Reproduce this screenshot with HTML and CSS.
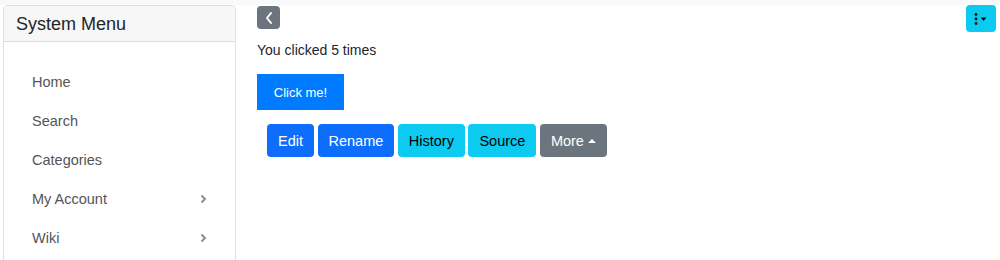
FILE: index.html
```html
<!DOCTYPE html>
<html>
<head>
<meta charset="utf-8">
<link rel="stylesheet" href="styles.css">
</head>
<body>
<div class="topbar"></div>
<div class="layout">
  <aside class="sidebar">
    <div class="sidebar-header">System Menu</div>
    <ul class="menu">
      <li class="menu-item">Home</li>
      <li class="menu-item">Search</li>
      <li class="menu-item">Categories</li>
      <li class="menu-item">My Account<svg class="chev" width="7" height="10" viewBox="0 0 7 10"><path d="M1.5 1.5 L5 5 L1.5 8.5" fill="none" stroke="#888" stroke-width="1.8"/></svg></li>
      <li class="menu-item">Wiki<svg class="chev" width="7" height="10" viewBox="0 0 7 10"><path d="M1.5 1.5 L5 5 L1.5 8.5" fill="none" stroke="#888" stroke-width="1.8"/></svg></li>
    </ul>
  </aside>
  <main class="main">
    <div class="toolbar">
      <button class="back-btn"><svg width="10" height="14" viewBox="0 0 10 14"><path d="M7 2 L3 7 L7 12" fill="none" stroke="#fff" stroke-width="2" stroke-linecap="round" stroke-linejoin="round"/></svg></button>
      <button class="kebab-btn"><svg width="18" height="14" viewBox="0 0 18 14"><circle cx="4" cy="2.5" r="1.4" fill="#111"/><circle cx="4" cy="7" r="1.4" fill="#111"/><circle cx="4" cy="11.5" r="1.4" fill="#111"/><path d="M8.5 5.5 L14.5 5.5 L11.5 9 Z" fill="#111"/></svg></button>
    </div>
    <p class="count">You clicked 5 times</p>
    <button class="click-btn">Click me!</button>
    <div class="actions">
      <button class="btn btn-primary">Edit</button>
      <button class="btn btn-primary">Rename</button>
      <button class="btn btn-info">History</button>
      <button class="btn btn-info">Source</button>
      <button class="btn btn-secondary">More <span class="caret-up"></span></button>
    </div>
  </main>
</div>
</body>
</html>
```

FILE: styles.css
```css
* { box-sizing: border-box; }
html, body { margin: 0; padding: 0; background: #fff; }
body {
  font-family: "Liberation Sans", Arial, sans-serif;
  color: #212529;
  width: 1000px;
  height: 260px;
  overflow: hidden;
}
.topbar { height: 5px; background: #f8f9fa; }
.layout { display: flex; }
.sidebar {
  margin-left: 3px;
  width: 233px;
  height: 255px;
  border: 1px solid #dfdfdf;
  border-bottom: none;
  border-radius: 5px 5px 0 0;
  flex-shrink: 0;
}
.sidebar-header {
  height: 36px;
  background: #f7f7f7;
  border-bottom: 1px solid #dcdcdc;
  border-radius: 5px 5px 0 0;
  padding-left: 12px;
  font-size: 18px;
  line-height: 36px;
  color: #212529;
}
.menu { list-style: none; margin: 0; padding: 20px 0 0 0; }
.menu-item {
  height: 39px;
  display: flex;
  align-items: center;
  justify-content: space-between;
  padding-left: 28px;
  padding-right: 28px;
  font-size: 14.5px;
  color: #555;
}
.chev { display: block; }
.main { flex: 1; padding-left: 21px; padding-right: 4px; }
.toolbar { display: flex; justify-content: space-between; align-items: flex-start; }
.back-btn {
  margin-top: 1px;
  width: 23px;
  height: 23px;
  padding: 0;
  border: none;
  border-radius: 4px;
  background: #6c757d;
  display: flex;
  align-items: center;
  justify-content: center;
}
.kebab-btn {
  width: 30px;
  height: 27px;
  padding: 0;
  border: none;
  border-radius: 4px;
  background: #0dcaf0;
  display: flex;
  align-items: center;
  justify-content: center;
}
.count { margin: 10px 0 0 0; font-size: 14px; line-height: 17px; color: #212529; }
.click-btn {
  margin-top: 15px;
  width: 87px;
  height: 36px;
  border: none;
  border-radius: 0;
  background: #007bff;
  color: #fff;
  font-family: "Liberation Sans", Arial, sans-serif;
  font-size: 13px;
  padding: 0;
}
.actions { display: flex; gap: 3.5px; margin: 14px 0 0 10px; }
.btn {
  height: 33px;
  border: none;
  border-radius: 4px;
  padding: 0 11px;
  font-family: "Liberation Sans", Arial, sans-serif;
  font-size: 14.5px;
  display: flex;
  align-items: center;
}
.btn-primary { background: #0d6efd; color: #fff; }
.btn-info { background: #0dcaf0; color: #000; }
.btn-secondary { background: #6c757d; color: #fff; }
.caret-up {
  display: inline-block;
  width: 0; height: 0;
  margin-left: 4px;
  border-left: 4px solid transparent;
  border-right: 4px solid transparent;
  border-bottom: 4px solid #fff;
}
```
